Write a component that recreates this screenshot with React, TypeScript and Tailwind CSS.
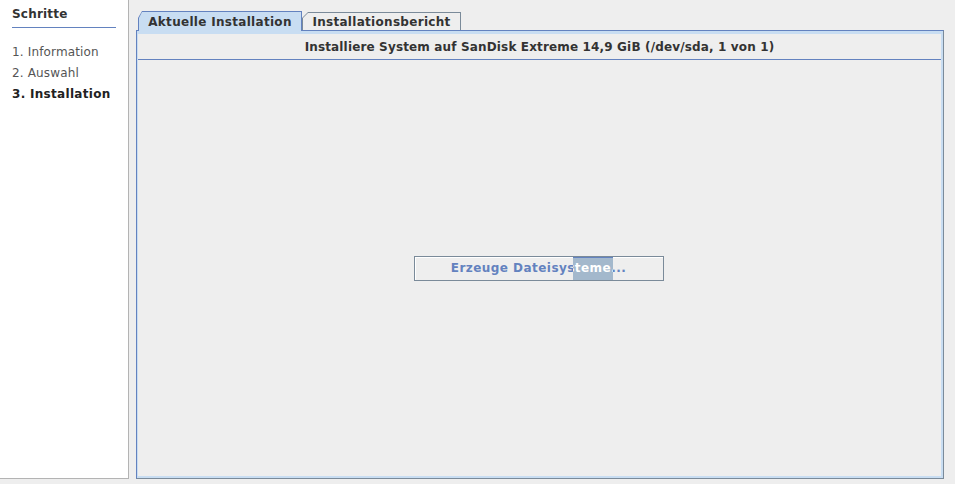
export default function App() {
  const steps = ['1. Information', '2. Auswahl']

  return (
    <div className="flex h-[484px] w-[955px] overflow-hidden bg-[#eeeeee] font-['DejaVu_Sans',sans-serif] text-[12px] text-[#333333]">
      {/* Schritte */}
      <aside className="h-[479px] w-[129px] shrink-0 border-r border-b border-[#b3b3b3] bg-white px-[12px]">
        <div className="pt-[6px] font-bold leading-[16px] tracking-[0.2px]">Schritte</div>
        <div className="mt-[5px] h-[1px] w-[104px] bg-[#6382bf]" />
        <ul className="mt-[14px] tracking-[0.15px]">
          {steps.map((s) => (
            <li key={s} className="leading-[21px] text-[#555555]">
              {s}
            </li>
          ))}
          <li className="font-bold leading-[21px] tracking-[0.3px] text-[#222222]">3. Installation</li>
        </ul>
      </aside>

      {/* Tabbed pane */}
      <main className="ml-[7px] flex w-[808px] flex-col pt-[12px]">
        <div className="flex h-[18px] items-end pl-[2px]">
          <div className="relative z-10 -mb-[1px] h-[20px] w-[164px] bg-[#6382bf] px-[1px] pt-[1px] [clip-path:polygon(0_7px,4px_0,100%_0,100%_100%,0_100%)]">
            <div className="flex h-full items-center justify-center bg-[#c8ddf2] font-bold tracking-[0.3px] text-[#333333] [clip-path:polygon(0_6px,3px_0,100%_0,100%_100%,0_100%)]">
              Aktuelle Installation
            </div>
          </div>
          <div className="h-[18px] w-[159px] bg-[#7a8a99] px-[1px] pt-[1px] [clip-path:polygon(0_6px,6px_0,100%_0,100%_100%,0_100%)]">
            <div className="flex h-full items-center justify-center bg-[#eeeeee] pt-[1px] font-bold tracking-[0.3px] text-[#333333] [clip-path:polygon(0_5px,5px_0,100%_0,100%_100%,0_100%)]">
              Installationsbericht
            </div>
          </div>
        </div>

        <div className="h-[449px] border border-[#6382bf] border-r-[#7a8a99] border-b-[#7a8a99]">
          <div className="flex h-full flex-col border-[2px] border-t-[3px] border-l-[1px] border-[#c8ddf2] bg-[#eeeeee]">
            <div className="flex h-[26px] shrink-0 items-center justify-center border-b border-[#6382bf] font-bold tracking-[0.15px] text-[#333333]">
              Installiere System auf SanDisk Extreme 14,9 GiB (/dev/sda, 1 von 1)
            </div>
            <div className="flex flex-1 items-center justify-center pr-[2px]">
              <div className="relative h-[25px] w-[250px] border border-[#7a8a99] bg-[#eeeeee] shadow-[inset_1px_1px_0_#ffffff]">
                <div className="flex h-full items-center justify-center font-bold tracking-[0.45px] text-[#6382bf]">
                  Erzeuge Dateisysteme...
                </div>
                <div className="absolute top-0 bottom-0 left-[158px] w-[40px] overflow-hidden border-t border-[#6382bf] bg-[#a3b8cc]">
                  <div className="absolute -top-[1px] left-[-158px] flex h-[23px] w-[248px] items-center justify-center font-bold tracking-[0.45px] text-white">
                    Erzeuge Dateisysteme...
                  </div>
                </div>
              </div>
            </div>
          </div>
        </div>
      </main>
    </div>
  )
}
